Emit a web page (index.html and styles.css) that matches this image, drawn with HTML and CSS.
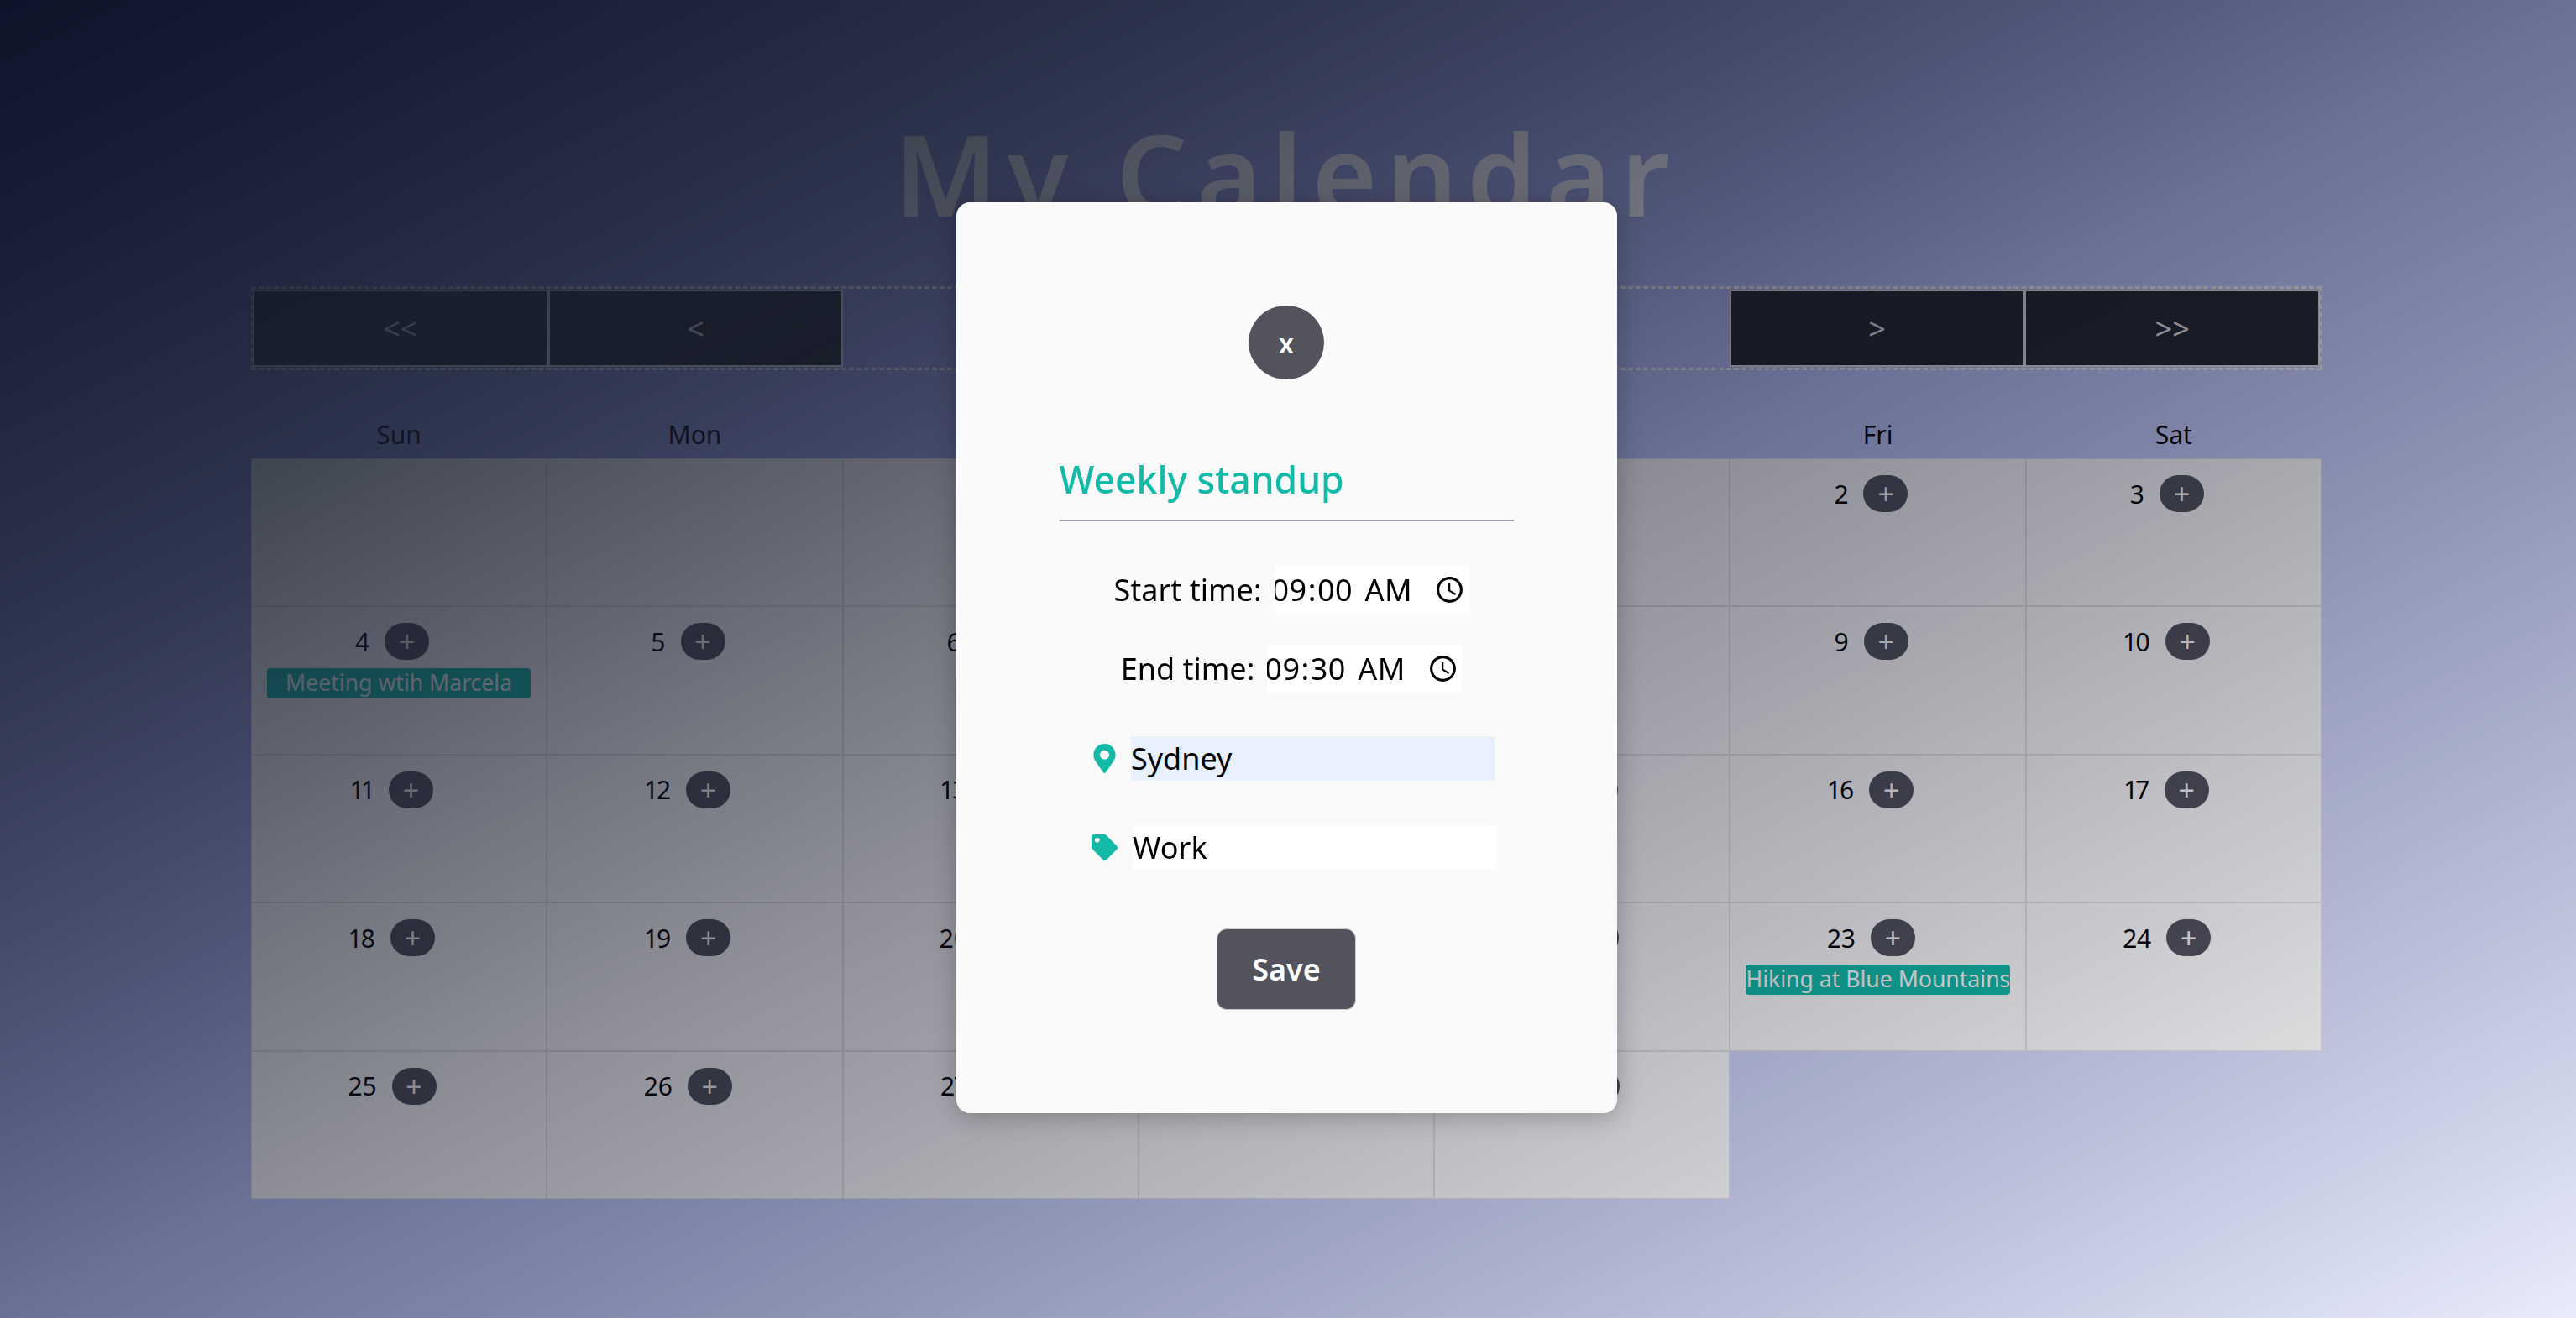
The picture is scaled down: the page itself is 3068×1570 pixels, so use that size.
FILE: index.html
```html
<!DOCTYPE html>
<html lang="en">
<head>
  <meta charset="UTF-8">
  <meta name="viewport" content="width=device-width, initial-scale=1.0">
  <title>My Calendar</title>
  <link rel="stylesheet" href="styles.css">
</head>
<body>
  <main class="app">
    <h1 class="app-title">My Calendar</h1>

    <nav class="month-nav">
      <button class="nav-btn">&lt;&lt;</button>
      <button class="nav-btn">&lt;</button>
      <div class="month-name">February 2024</div>
      <button class="nav-btn">&gt;</button>
      <button class="nav-btn">&gt;&gt;</button>
    </nav>

    <div class="weekdays">
      <div>Sun</div><div>Mon</div><div>Tue</div><div>Wed</div><div>Thu</div><div>Fri</div><div>Sat</div>
    </div>

    <div class="days">
      <div class="day"></div>
      <div class="day"></div>
      <div class="day"></div>
      <div class="day"></div>
      <div class="day"><div class="day-head"><span>1</span><button class="add-btn">+</button></div></div>
      <div class="day"><div class="day-head"><span>2</span><button class="add-btn">+</button></div></div>
      <div class="day"><div class="day-head"><span>3</span><button class="add-btn">+</button></div></div>

      <div class="day"><div class="day-head"><span>4</span><button class="add-btn">+</button></div><div class="event">Meeting wtih Marcela</div></div>
      <div class="day"><div class="day-head"><span>5</span><button class="add-btn">+</button></div></div>
      <div class="day"><div class="day-head"><span>6</span><button class="add-btn">+</button></div></div>
      <div class="day"><div class="day-head"><span>7</span><button class="add-btn">+</button></div></div>
      <div class="day"><div class="day-head"><span>8</span><button class="add-btn">+</button></div></div>
      <div class="day"><div class="day-head"><span>9</span><button class="add-btn">+</button></div></div>
      <div class="day"><div class="day-head"><span>10</span><button class="add-btn">+</button></div></div>

      <div class="day"><div class="day-head"><span>11</span><button class="add-btn">+</button></div></div>
      <div class="day"><div class="day-head"><span>12</span><button class="add-btn">+</button></div></div>
      <div class="day"><div class="day-head"><span>13</span><button class="add-btn">+</button></div></div>
      <div class="day"><div class="day-head"><span>14</span><button class="add-btn">+</button></div></div>
      <div class="day"><div class="day-head"><span>15</span><button class="add-btn">+</button></div></div>
      <div class="day"><div class="day-head"><span>16</span><button class="add-btn">+</button></div></div>
      <div class="day"><div class="day-head"><span>17</span><button class="add-btn">+</button></div></div>

      <div class="day"><div class="day-head"><span>18</span><button class="add-btn">+</button></div></div>
      <div class="day"><div class="day-head"><span>19</span><button class="add-btn">+</button></div></div>
      <div class="day"><div class="day-head"><span>20</span><button class="add-btn">+</button></div></div>
      <div class="day"><div class="day-head"><span>21</span><button class="add-btn">+</button></div></div>
      <div class="day"><div class="day-head"><span>22</span><button class="add-btn">+</button></div></div>
      <div class="day"><div class="day-head"><span>23</span><button class="add-btn">+</button></div><div class="event">Hiking at Blue Mountains</div></div>
      <div class="day"><div class="day-head"><span>24</span><button class="add-btn">+</button></div></div>

      <div class="day"><div class="day-head"><span>25</span><button class="add-btn">+</button></div></div>
      <div class="day"><div class="day-head"><span>26</span><button class="add-btn">+</button></div></div>
      <div class="day"><div class="day-head"><span>27</span><button class="add-btn">+</button></div></div>
      <div class="day"><div class="day-head"><span>28</span><button class="add-btn">+</button></div></div>
      <div class="day"><div class="day-head"><span>29</span><button class="add-btn">+</button></div></div>
    </div>
  </main>

  <div class="overlay">
    <form class="modal">
      <button type="button" class="close-btn">x</button>

      <input class="title-input" type="text" value="Weekly standup">

      <div class="time-row">
        <label>Start time:</label>
        <input class="time-input" type="time" value="09:00">
      </div>
      <div class="time-row">
        <label>End time:</label>
        <input class="time-input" type="time" value="09:30">
      </div>

      <div class="field-row">
        <svg class="marker-icon" viewBox="0 0 384 512"><path d="M172.268 501.67C26.97 291.031 0 262.345 0 192 0 85.961 85.961 0 192 0s192 85.961 192 192c0 70.345-26.97 99.031-172.268 309.67-9.535 13.774-29.93 13.773-39.464 0zM192 272c44.183 0 80-35.817 80-80s-35.817-80-80-80-80 35.817-80 80 35.817 80 80 80z"/></svg>
        <input class="field-input autofilled" type="text" value="Sydney">
      </div>
      <div class="field-row">
        <svg class="tag-icon" viewBox="0 0 512 512"><path d="M0 252.118V48C0 21.49 21.49 0 48 0h204.118a48 48 0 0 1 33.941 14.059l211.882 211.882c18.745 18.745 18.745 49.137 0 67.882L293.823 497.941c-18.745 18.745-49.137 18.745-67.882 0L14.059 286.059A48 48 0 0 1 0 252.118zM112 64c-26.51 0-48 21.49-48 48s21.49 48 48 48 48-21.49 48-48-21.49-48-48-48z"/></svg>
        <input class="field-input" type="text" value="Work">
      </div>

      <button type="button" class="save-btn">Save</button>
    </form>
  </div>
</body>
</html>
```
FILE: styles.css
```css
* {
  box-sizing: border-box;
}
html, body {
  height: 100%;
}
body {
  margin: 0;
  padding-right: 4px;
  font-family: "Noto Sans", sans-serif;
  color: #000;
  background: linear-gradient(to bottom right, #5a62b0, #c0caff 50%, #e9ecfb);
}
button, input {
  font-family: inherit;
}

.app {
  width: 2466px;
  margin: 0 auto;
  padding-top: 136px;
}
.app-title {
  margin: 0 0 64px;
  text-align: center;
  font-size: 133px;
  line-height: 141px;
  font-weight: 600;
  letter-spacing: 11px;
  color: #fff;
}

.month-nav {
  display: grid;
  grid-template-columns: repeat(7, minmax(0, 1fr));
  height: 100px;
  padding: 1px 0;
  border-style: dashed;
  border-color: #f5f5f5;
  border-width: 3px 2px;
}
.nav-btn {
  margin: 0;
  border: 2px solid #e8e8e8;
  background: #24262c;
  color: #eee;
  font-size: 36px;
}
.month-name {
  grid-column: span 3;
  align-self: center;
  text-align: center;
  font-size: 40px;
}

.weekdays {
  display: grid;
  grid-template-columns: repeat(7, minmax(0, 1fr));
  margin-top: 52px;
  height: 53px;
  text-align: center;
  font-size: 30px;
  line-height: 50px;
}

.days {
  display: grid;
  grid-template-columns: repeat(7, minmax(0, 1fr));
  grid-auto-rows: 176.4px;
}
.day {
  padding: 19px 18px 0;
  border: 1px solid #e6e6e6;
  background: #fff;
}
.day-head {
  display: flex;
  justify-content: center;
  align-items: center;
  gap: 18px;
  font-size: 30px;
  font-variant-numeric: proportional-nums;
}
.add-btn {
  width: 53px;
  height: 44px;
  margin-right: 16px;
  padding: 0;
  border: none;
  border-radius: 22px;
  background: #53535d;
  color: #fff;
  font-size: 34px;
  line-height: 44px;
}
.event {
  margin-top: 10px;
  height: 36px;
  border-radius: 4px;
  background: #12bca8;
  color: #fff;
  font-size: 26.6px;
  line-height: 34px;
  text-align: center;
  white-space: nowrap;
}

/* modal sits over the dimmed page */
.overlay {
  position: fixed;
  inset: 0;
  display: flex;
  align-items: center;
  justify-content: center;
  padding: 0 4px 3px 0;
  background: linear-gradient(to bottom right, rgb(14, 20, 40), rgba(24, 30, 46, 0.86) 20%, rgba(10, 12, 30, 0.47) 50%, rgba(28, 35, 48, 0));
}
.modal {
  display: flex;
  flex-direction: column;
  align-items: center;
  width: 787px;
  height: 1085px;
  padding-top: 123px;
  border-radius: 16px;
  background: #fafafa;
  box-shadow: 0 4px 30px rgba(0, 0, 0, 0.25);
}
.close-btn {
  width: 90px;
  height: 88px;
  padding: 0;
  border: none;
  border-radius: 50%;
  background: #53535d;
  color: #fff;
  font-size: 32px;
  font-weight: 600;
}
.title-input {
  width: 541px;
  height: 83px;
  margin-top: 86px;
  padding: 0 0 16px;
  border: none;
  border-bottom: 2px solid #9a9fb0;
  background: transparent;
  color: #13baa8;
  font-size: 44.5px;
  font-weight: 500;
}
.time-row {
  display: flex;
  align-items: center;
  gap: 15px;
  height: 57px;
  margin-top: 53px;
  padding-left: 12px;
  font-size: 36px;
}
.time-row + .time-row {
  margin-top: 37px;
}
.time-input {
  width: 232px;
  height: 57px;
  padding: 0;
  border: none;
  background: #fff;
  font-size: 36px;
  letter-spacing: 0.5px;
}
.time-input::-webkit-datetime-edit {
  margin-left: -4px;
}
.time-input::-webkit-datetime-edit-ampm-field {
  margin-left: 6px;
}
.time-input::-webkit-calendar-picker-indicator {
  margin-right: 1px;
}
.field-row {
  display: flex;
  align-items: center;
  gap: 18px;
  margin-top: 52px;
  padding-left: 18px;
}
.field-row + .field-row {
  margin-top: 53px;
}
.marker-icon {
  width: 27px;
  height: 35px;
  fill: #13baa8;
}
.tag-icon {
  width: 31px;
  height: 31px;
  fill: #13baa8;
}
.field-input {
  width: 433px;
  height: 53px;
  padding: 0;
  border: none;
  background: #fff;
  font-size: 36px;
}
.autofilled {
  background: #e8f0fe;
}
.save-btn {
  width: 166px;
  height: 97px;
  margin-top: 70px;
  border: 1px solid #ccc;
  border-radius: 12px;
  background: #53535d;
  color: #fff;
  font-size: 36px;
  font-weight: 600;
}
```
